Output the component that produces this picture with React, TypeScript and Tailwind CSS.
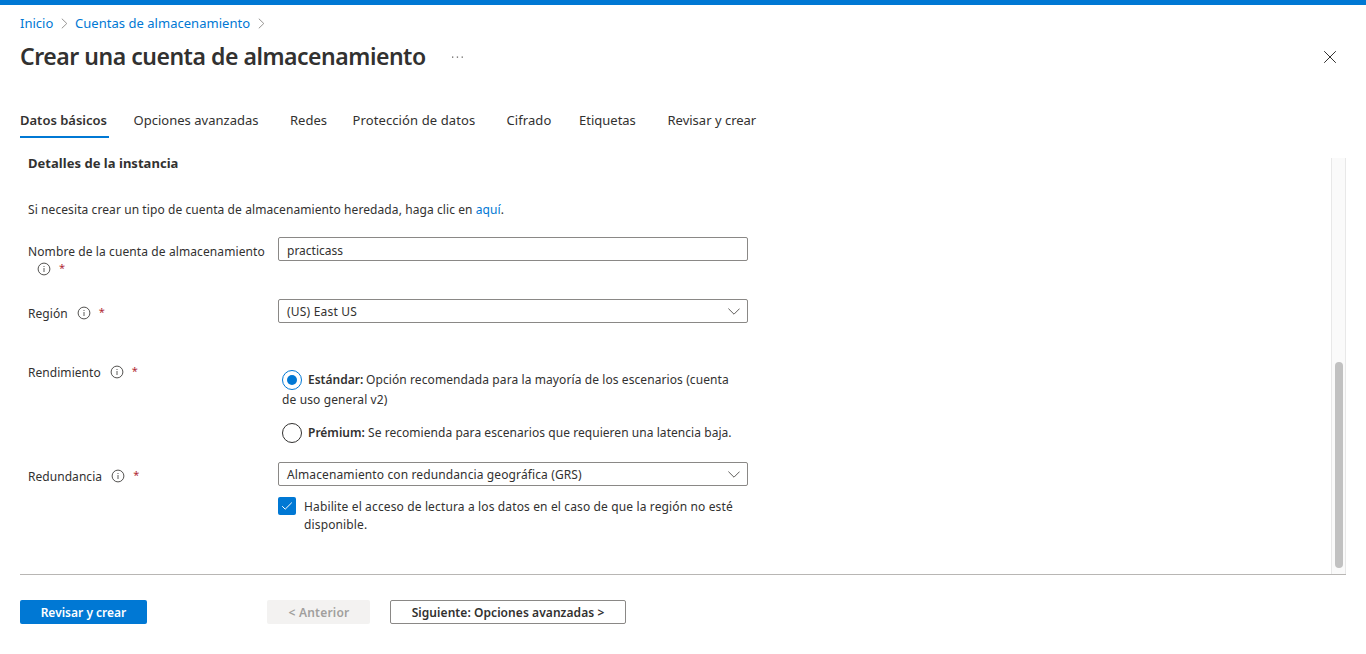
import type { ReactNode } from 'react';

function Info() {
  return (
    <svg className="h-3.5 w-3.5 shrink-0" viewBox="0 0 14 14" fill="none" stroke="#4a4947">
      <circle cx="7" cy="7" r="5.9" strokeWidth="0.95" />
      <path d="M7 6v4" strokeWidth="0.9" />
      <path d="M7 4v1" strokeWidth="0.9" />
    </svg>
  );
}

function Required() {
  return <span className="-mt-0.5 text-[11px] leading-[14px] text-[#b02a35]">*</span>;
}

function Crumb() {
  return (
    <svg className="h-[11px] w-[7px]" viewBox="0 0 7 11" fill="none" stroke="#8a8886">
      <path d="M0.8 0.7L5.8 5.5L0.8 10.3" strokeWidth="0.9" />
    </svg>
  );
}

function Label({ children }: { children: ReactNode }) {
  return (
    <div className="flex h-[18px] w-[250px] shrink-0 items-center">
      <span className="pt-0.5 tracking-[0.05px]">{children}</span>
      <span className="ml-[9px] flex items-center gap-2">
        <Info />
        <Required />
      </span>
    </div>
  );
}

function Select({ children }: { children: ReactNode }) {
  return (
    <div className="flex h-6 w-[470px] items-center justify-between rounded-xs border border-[#8a8886] pr-[7px] pl-2">
      {children}
      <svg className="h-[7px] w-3" viewBox="0 0 12 7" fill="none" stroke="#605e5c">
        <path d="M0.4 0.6L6 6.2L11.6 0.6" />
      </svg>
    </div>
  );
}

const tabs = [
  { name: 'Opciones avanzadas', style: 'w-[156.5px] tracking-[0.02px]' },
  { name: 'Redes', style: 'w-[62.5px]' },
  { name: 'Protección de datos', style: 'w-[154px] tracking-[0.11px]' },
  { name: 'Cifrado', style: 'w-[72.5px] tracking-[0.08px]' },
  { name: 'Etiquetas', style: 'w-[88.5px]' },
  { name: 'Revisar y crear', style: 'w-[100px]' },
];

export default function App() {
  return (
    <div className="flex h-[654px] w-[1366px] flex-col overflow-hidden border-t-[5px] border-[#0078d4] bg-white font-['Noto_Sans','Open_Sans',sans-serif] text-xs leading-[18px] text-[#323130]">
      <header className="h-[99px] pt-[9px] pr-[30px] pl-5">
        <nav className="flex h-[18px] items-center text-[13px] text-[#0078d4]">
          <a className="w-[41px]">Inicio</a>
          <Crumb />
          <a className="ml-[7px] w-[183px] tracking-[0.03px]">Cuentas de almacenamiento</a>
          <Crumb />
        </nav>
        <div className="mt-[9px] flex h-8 items-center">
          <h1 className="w-[431px] pb-0.5 text-[23px] font-semibold tracking-[-0.47px] whitespace-nowrap">Crear una cuenta de almacenamiento</h1>
          <svg className="h-0.5 w-[13px]" viewBox="0 0 13 2" fill="#605e5c">
            <path d="M1 .5h1.3v1.3H1zM5.8 .5h1.3v1.3H5.8zM10.6 .5h1.3v1.3h-1.3z" />
          </svg>
          <svg className="ml-auto h-3 w-3" viewBox="0 0 12 12" stroke="#323130">
            <path d="M0.2 0.2L11.8 11.8M11.8 0.2L0.2 11.8" />
          </svg>
        </div>
      </header>

      <div className="flex h-[34px] shrink-0 pt-[7px] pl-5 text-[13px]">
        <div className="mr-[24.5px] h-[27px] w-[89px] border-b-2 border-[#0078d4] font-semibold">Datos básicos</div>
        {tabs.map((t) => (
          <div key={t.name} className={t.style}>{t.name}</div>
        ))}
      </div>

      <div className="mx-5 mt-5 flex h-[417px] shrink-0 border-b border-[#b8b6b4]">
        <main className="flex-1 pl-2">
          <h2 className="mt-[-4px] text-[13px] font-bold tracking-[0.03px]">Detalles de la instancia</h2>
          <p className="mt-[29px] tracking-[0.085px]">
            Si necesita crear un tipo de cuenta de almacenamiento heredada, haga clic en <a className="text-[#0078d4]">aquí</a>.
          </p>

          <div className="mt-[18px] flex">
            <div className="w-[250px] shrink-0 pt-1.5">
              <div className="tracking-[0.1px]">Nombre de la cuenta de almacenamiento</div>
              <div className="-mt-px flex h-[18px] items-center gap-2 pl-[9px]">
                <Info />
                <Required />
              </div>
            </div>
            <div className="flex h-6 w-[470px] items-center rounded-xs border border-[#8a8886] pt-1 pl-2">practicass</div>
          </div>

          <div className="mt-[21px] flex h-[25px]">
            <div className="pt-[5px]"><Label>Región</Label></div>
            <Select><span className="pt-0.5 tracking-[0.2px]">(US) East US</span></Select>
          </div>

          <div className="mt-[39px] flex">
            <Label>Rendimiento</Label>
            <div className="w-[470px] pt-[7px] pl-1">
              <div className="flex h-5 items-center">
                <span className="mr-1.5 flex h-5 w-5 items-center justify-center rounded-full border border-[#0078d4]">
                  <span className="h-2.5 w-2.5 rounded-full bg-[#0078d4]" />
                </span>
                <b className="w-[58px] font-semibold">Estándar:</b>
                <span className="tracking-[0.09px]">Opción recomendada para la mayoría de los escenarios (cuenta</span>
              </div>
              <div className="leading-5 tracking-[0.12px]">de uso general v2)</div>
              <div className="mt-[13px] flex h-5 items-center">
                <span className="mr-1.5 h-5 w-5 rounded-full border border-[#323130]" />
                <b className="w-[60px] font-semibold">Prémium:</b>
                <span className="tracking-[0.05px]">Se recomienda para escenarios que requieren una latencia baja.</span>
              </div>
            </div>
          </div>

          <div className="mt-[19px] flex">
            <div className="pt-[5px]"><Label>Redundancia</Label></div>
            <Select><span className="pt-0.5 tracking-[0.12px]">Almacenamiento con redundancia geográfica (GRS)</span></Select>
          </div>
          <div className="mt-[11px] ml-[250px] flex">
            <span className="mr-2 flex h-[18px] w-[18px] items-center justify-center rounded-xs bg-[#0078d4]">
              <svg className="h-3 w-3" viewBox="0 0 12 12" fill="none" stroke="white">
                <path d="M1.2 6.2L4.2 9.2L10.8 2.6" />
              </svg>
            </span>
            <div className="pt-px tracking-[0.135px]">
              Habilite el acceso de lectura a los datos en el caso de que la región no esté
              <br />
              disponible.
            </div>
          </div>
        </main>
        <div className="h-[416px] w-[15px] border-x border-[#e8e8e8] bg-[#fafafa] pt-[204px] pl-[3px]">
          <div className="h-[206px] w-2 rounded-full bg-[#c1c1c1]" />
        </div>
      </div>

      <footer className="mt-[25px] flex h-6 pl-5 font-semibold">
        <button className="mr-[120px] flex w-[127px] items-center justify-center rounded-xs bg-[#0078d4] pt-0.5 text-white">Revisar y crear</button>
        <button className="mr-5 flex w-[103px] items-center justify-center rounded-xs bg-[#f3f2f1] pt-0.5 pl-px tracking-[0.2px] text-[#a19f9d]">&lt; Anterior</button>
        <button className="flex w-[236px] items-center justify-center rounded-xs border border-[#8a8886] pt-0.5 tracking-[0.07px]">Siguiente: Opciones avanzadas &gt;</button>
      </footer>
    </div>
  );
}
